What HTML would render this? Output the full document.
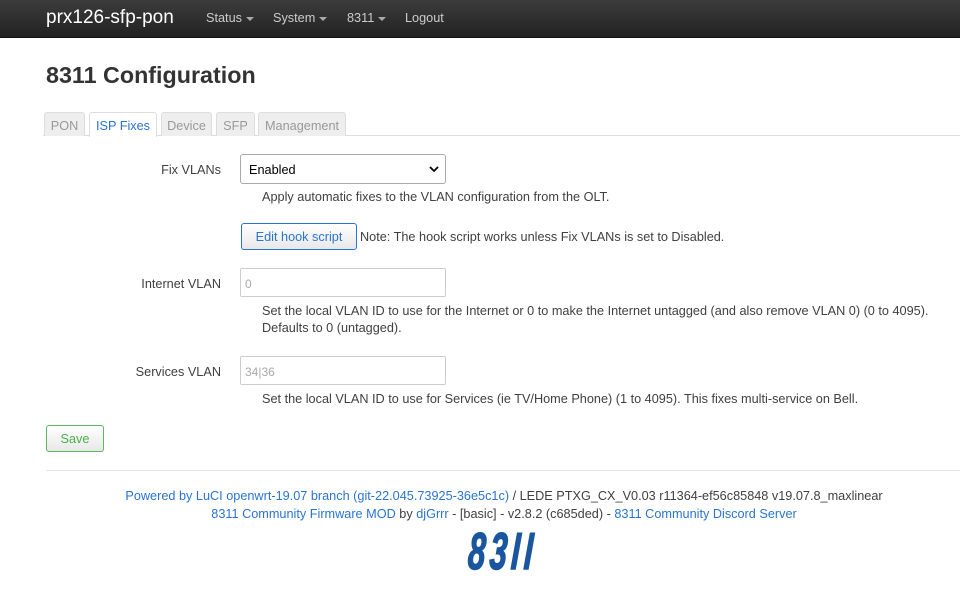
<!DOCTYPE html>
<html><head><meta charset="utf-8"><style>
*{box-sizing:border-box}
body{margin:0;width:960px;height:595px;background:#fff;font-family:"Liberation Sans",sans-serif;color:#404040;position:relative;overflow:hidden;font-size:12.7px}
.nav{position:absolute;left:0;top:0;width:960px;height:38px;background:linear-gradient(#3c3c3c,#222);border-bottom:1px solid #111}
.brand{position:absolute;left:46px;top:7px;color:#fff;font-size:19px}
.nv{position:absolute;top:11px;color:#ccc;font-size:12.7px}
.car{display:inline-block;border-left:4px solid transparent;border-right:4px solid transparent;border-top:4px solid #aaa;vertical-align:middle;margin-left:4px}
h1{position:absolute;left:46px;top:62px;margin:0;font-size:23.3px;font-weight:bold;color:#333}
.tabs{position:absolute;left:43px;top:112px;width:917px;height:24px;border-bottom:1px solid #ddd}
.tab{position:absolute;top:0;height:24px;border:1px solid #ddd;border-bottom:none;background:#eee;color:#999;font-size:12.7px;padding:6px 0 0;text-align:center;white-space:nowrap;border-radius:3px 3px 0 0}
.tab.a{background:#fff;color:#2a74d1;height:25px}
.lbl{position:absolute;right:739px;color:#404040}
.sel{position:absolute;left:240px;top:154px;width:206px;height:30px;border:1px solid #aaa;border-radius:3px;padding:8px 8px;color:#000}
.inp{position:absolute;left:240px;width:206px;height:29px;border:1px solid #ccc;border-radius:2px;padding:8px 4px;color:#aaa;font-size:12px}
.d{position:absolute;left:262px;color:#404040;line-height:17px;white-space:nowrap}
.btn{position:absolute;border-radius:3px;background:linear-gradient(#fff,#e8e8e8);text-align:center}
.ft{position:absolute;left:0;width:1008px;text-align:center;color:#404040}
.ft a{color:#2a74d1;text-decoration:none}
</style></head><body>
<div class="nav">
<div class="brand">prx126-sfp-pon</div>
<div class="nv" style="left:206px">Status<span class="car"></span></div>
<div class="nv" style="left:273px">System<span class="car"></span></div>
<div class="nv" style="left:347px">8311<span class="car"></span></div>
<div class="nv" style="left:405px">Logout</div>
</div>
<h1>8311 Configuration</h1>
<div class="tabs">
<div class="tab" style="left:1px;width:41px">PON</div>
<div class="tab a" style="left:46px;width:68px">ISP Fixes</div>
<div class="tab" style="left:118px;width:51px">Device</div>
<div class="tab" style="left:173px;width:39px">SFP</div>
<div class="tab" style="left:215px;width:88px">Management</div>
</div>
<div class="lbl" style="top:163px">Fix VLANs</div>
<div class="sel">Enabled<svg style="position:absolute;right:6px;top:11px" width="10" height="7" viewBox="0 0 10 7"><path d="M1 1l4 4 4-4" fill="none" stroke="#000" stroke-width="1.8"/></svg></div>
<div class="d" style="top:189px">Apply automatic fixes to the VLAN configuration from the OLT.</div>
<div class="btn" style="left:241px;top:223px;width:116px;height:27px;border:1px solid #2a74d1;color:#2a74d1;padding-top:6px">Edit hook script</div>
<div class="d" style="left:360px;top:229px">Note: The hook script works unless Fix VLANs is set to Disabled.</div>
<div class="lbl" style="top:277px">Internet VLAN</div>
<div class="inp" style="top:268px">0</div>
<div class="d" style="top:303px">Set the local VLAN ID to use for the Internet or 0 to make the Internet untagged (and also remove VLAN 0) (0 to 4095).<br>Defaults to 0 (untagged).</div>
<div class="lbl" style="top:365px">Services VLAN</div>
<div class="inp" style="top:356px">34|36</div>
<div class="d" style="top:391px">Set the local VLAN ID to use for Services (ie TV/Home Phone) (1 to 4095). This fixes multi-service on Bell.</div>
<div class="btn" style="left:46px;top:425px;width:58px;height:27px;border:1px solid #5cb85c;color:#4cae4c;padding-top:6px">Save</div>
<div style="position:absolute;left:46px;top:470px;width:914px;border-top:1px solid #e5e5e5"></div>
<div class="ft" style="top:489px"><a>Powered by LuCI openwrt-19.07 branch (git-22.045.73925-36e5c1c)</a> / LEDE PTXG_CX_V0.03 r11364-ef56c85848 v19.07.8_maxlinear</div>
<div class="ft" style="top:507px"><a>8311 Community Firmware MOD</a> by <a>djGrrr</a> - [basic] - v2.8.2 (c685ded) - <a>8311 Community Discord Server</a></div>
<div style="position:absolute;left:470px;top:526px;font-size:52px;font-weight:bold;font-style:italic;color:#1a56a0;letter-spacing:7px;transform:scaleX(0.6) skewX(-6deg);transform-origin:left top;line-height:52px;white-space:nowrap;-webkit-text-stroke:1.5px #1a56a0">83II</div>
</body></html>
